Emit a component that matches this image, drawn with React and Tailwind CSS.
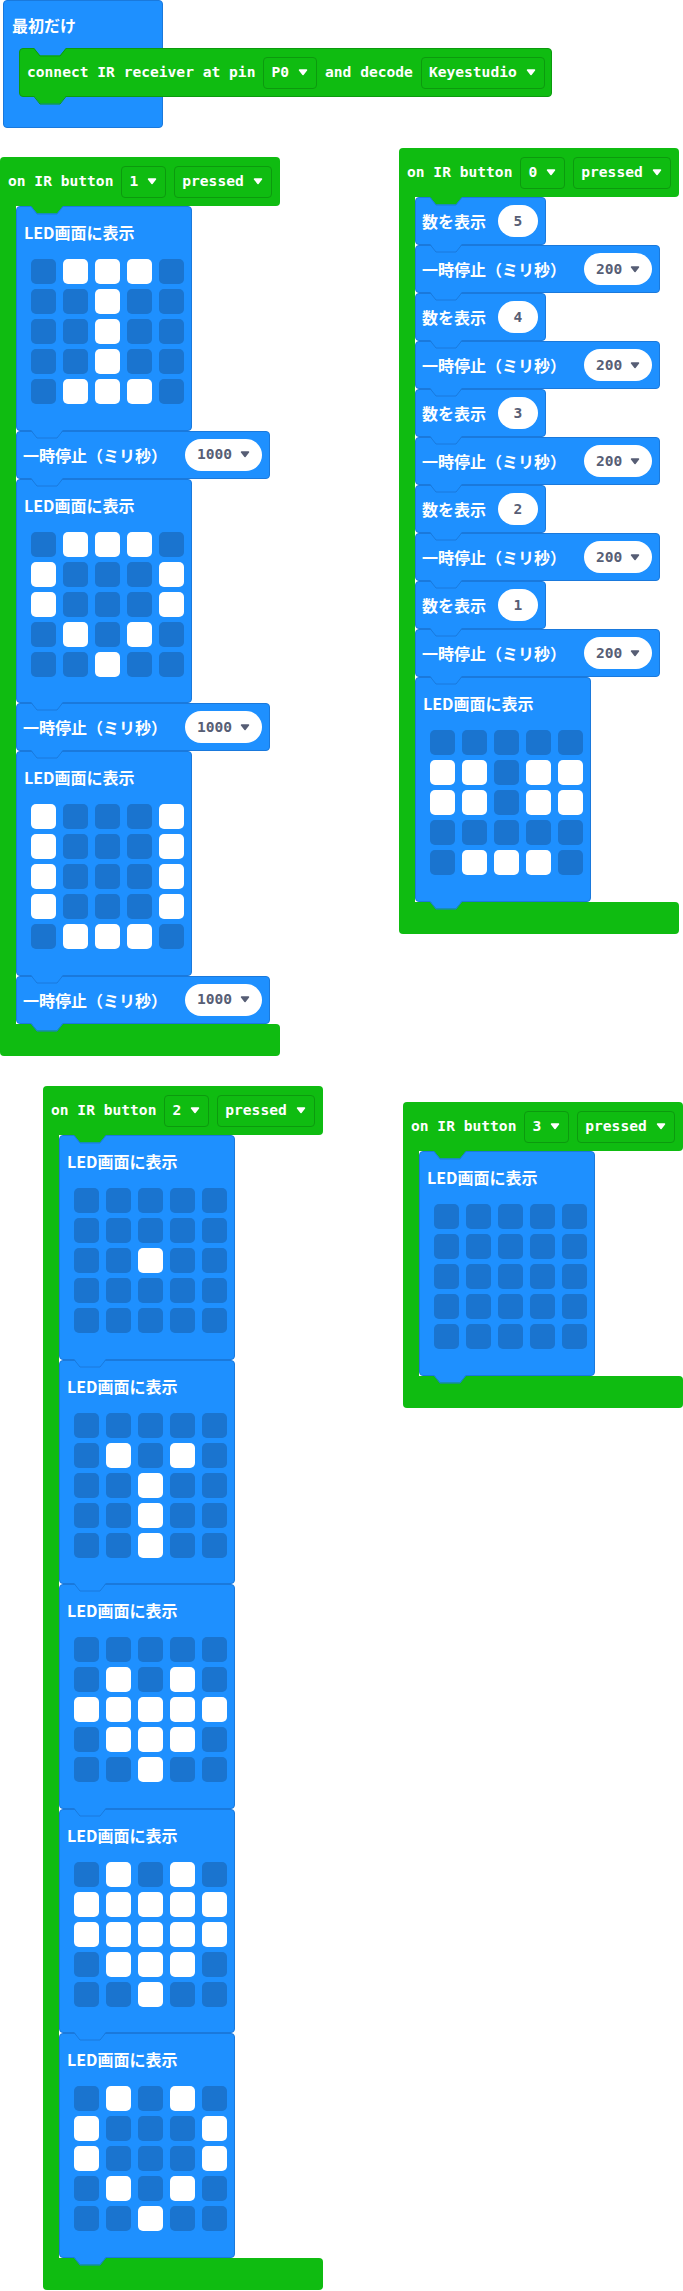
import React from 'react';

const mono = "font-['DejaVu_Sans_Mono',monospace] text-[14.6px] font-bold leading-none";
const jp = "font-['Noto_Sans_CJK_JP',sans-serif] text-[16px] font-bold leading-6";

function Tab({ fill, stroke, className }) {
  return (
    <svg className={'absolute z-10 ' + className} width="32" height="9" viewBox="0 0 32 9">
      <path d="M0 0 L6 7.5 L26 7.5 L32 0 Z" fill={fill} />
      <path d="M0 0.5 L6 8 L26 8 L32 0.5" fill="none" stroke={stroke} strokeWidth="1" />
    </svg>
  );
}

function Arrow({ color }) {
  return (
    <svg width="10" height="7" viewBox="0 0 10 7">
      <path d="M1.5 1 L8.5 1 L5 5.5 Z" fill={color} stroke={color} strokeWidth="1.5" strokeLinejoin="round" />
    </svg>
  );
}

function Dropdown({ label }) {
  return (
    <div className="flex h-8 items-center gap-[9px] rounded-[4px] border border-[#0c9a0e] pl-[7px] pr-[8px] text-white">
      <span className={mono}>{label}</span>
      <Arrow color="#ffffff" />
    </div>
  );
}

function Pill({ value, arrow }) {
  return (
    <div className="flex h-8 min-w-[40px] items-center justify-center gap-2 rounded-full bg-white px-3 text-[#575e75]">
      <span className={mono}>{value}</span>
      {arrow && <Arrow color="#575e75" />}
    </div>
  );
}

function Pause({ ms }) {
  return (
    <div className="relative flex h-12 items-center gap-[18px] rounded-[4px] border border-[#1a79dc] bg-[#1e90ff] pl-[6px] pr-[7px] text-white">
      <span className={jp}>一時停止（ミリ秒）</span>
      <Pill value={ms} arrow />
      <Tab fill="#1e90ff" stroke="#1a79dc" className="left-[14px] top-full" />
    </div>
  );
}

function ShowNumber({ n }) {
  return (
    <div className="relative flex h-12 items-center gap-3 rounded-[4px] border border-[#1a79dc] bg-[#1e90ff] pl-[6px] pr-[7px] text-white">
      <span className={jp}>数を表示</span>
      <Pill value={n} />
      <Tab fill="#1e90ff" stroke="#1a79dc" className="left-[14px] top-full" />
    </div>
  );
}

function Leds({ rows }) {
  return (
    <div className="relative flex h-[224.5px] w-[176px] flex-col rounded-[4px] border border-[#1a79dc] bg-[#1e90ff]">
      <div className={jp + ' pl-[7px] pt-[13px] text-white'}>LED画面に表示</div>
      <div className="ml-[14px] mt-[15px] grid grid-cols-[repeat(5,25px)] gap-x-[7px] gap-y-[5px]">
        {rows.join('').split('').map((c, i) => (
          <div key={i} className={c === '1' ? 'h-[25px] w-[25px] rounded-[5px] bg-white' : 'h-[25px] w-[25px] rounded-[5px] bg-[#1a74cf]'} />
        ))}
      </div>
      <Tab fill="#1e90ff" stroke="#1a79dc" className="left-[14px] top-full" />
    </div>
  );
}

function IRButton({ num, className, children }) {
  return (
    <div className={'absolute flex flex-col ' + className}>
      <div className="relative flex h-[49px] w-[280px] items-center gap-2 rounded-t-[4px] rounded-br-[4px] bg-[#0fbc11] pl-2 text-white">
        <span className={mono}>on IR button</span>
        <Dropdown label={num} />
        <Dropdown label="pressed" />
        <Tab fill="#0fbc11" stroke="#1a79dc" className="left-[31px] top-full" />
      </div>
      <div className="flex">
        <div className="w-4 bg-[#0fbc11]" />
        <div className="flex flex-col items-start">{children}</div>
      </div>
      <div className="h-8 w-[280px] rounded-b-[4px] rounded-tr-[4px] bg-[#0fbc11]" />
    </div>
  );
}

const I = ['01110', '00100', '00100', '00100', '01110'];
const HEART = ['01110', '10001', '10001', '01010', '00100'];
const HEART_OUT = ['01010', '10001', '10001', '01010', '00100'];
const U = ['10001', '10001', '10001', '10001', '01110'];
const SMILE = ['00000', '11011', '11011', '00000', '01110'];
const EMPTY = ['00000', '00000', '00000', '00000', '00000'];

export default function App() {
  return (
    <div className="relative h-[2291px] w-[683px] overflow-hidden bg-white">
      {/* on start */}
      <div className="absolute left-[3px] top-0 flex h-[128px] w-[160px] flex-col rounded-[4px] border border-[#1a79dc] bg-[#1e90ff]">
        <div className={jp + ' flex h-[47px] items-center pl-2 text-white'}>最初だけ</div>
        <div className="relative ml-[15px] flex h-[49px] w-max items-center gap-2 self-start rounded-[4px] border border-[#0c9a0e] bg-[#0fbc11] pl-[7px] pr-[6px] text-white">
          <Tab fill="#1e90ff" stroke="#0c9a0e" className="left-[14px] top-[-1px]" />
          <span className={mono}>connect IR receiver at pin</span>
          <Dropdown label="P0" />
          <span className={mono}>and decode</span>
          <Dropdown label="Keyestudio" />
          <Tab fill="#0fbc11" stroke="#0c9a0e" className="left-[14px] top-full" />
        </div>
      </div>

      <IRButton num="1" className="left-0 top-[157px]">
        <Leds rows={I} />
        <Pause ms="1000" />
        <Leds rows={HEART} />
        <Pause ms="1000" />
        <Leds rows={U} />
        <Pause ms="1000" />
      </IRButton>

      <IRButton num="0" className="left-[399px] top-[148px]">
        <ShowNumber n="5" />
        <Pause ms="200" />
        <ShowNumber n="4" />
        <Pause ms="200" />
        <ShowNumber n="3" />
        <Pause ms="200" />
        <ShowNumber n="2" />
        <Pause ms="200" />
        <ShowNumber n="1" />
        <Pause ms="200" />
        <Leds rows={SMILE} />
      </IRButton>

      <IRButton num="2" className="left-[43px] top-[1086px]">
        <Leds rows={['00000', '00000', '00100', '00000', '00000']} />
        <Leds rows={['00000', '01010', '00100', '00100', '00100']} />
        <Leds rows={['00000', '01010', '11111', '01110', '00100']} />
        <Leds rows={['01010', '11111', '11111', '01110', '00100']} />
        <Leds rows={HEART_OUT} />
      </IRButton>

      <IRButton num="3" className="left-[403px] top-[1102px]">
        <Leds rows={EMPTY} />
      </IRButton>
    </div>
  );
}
